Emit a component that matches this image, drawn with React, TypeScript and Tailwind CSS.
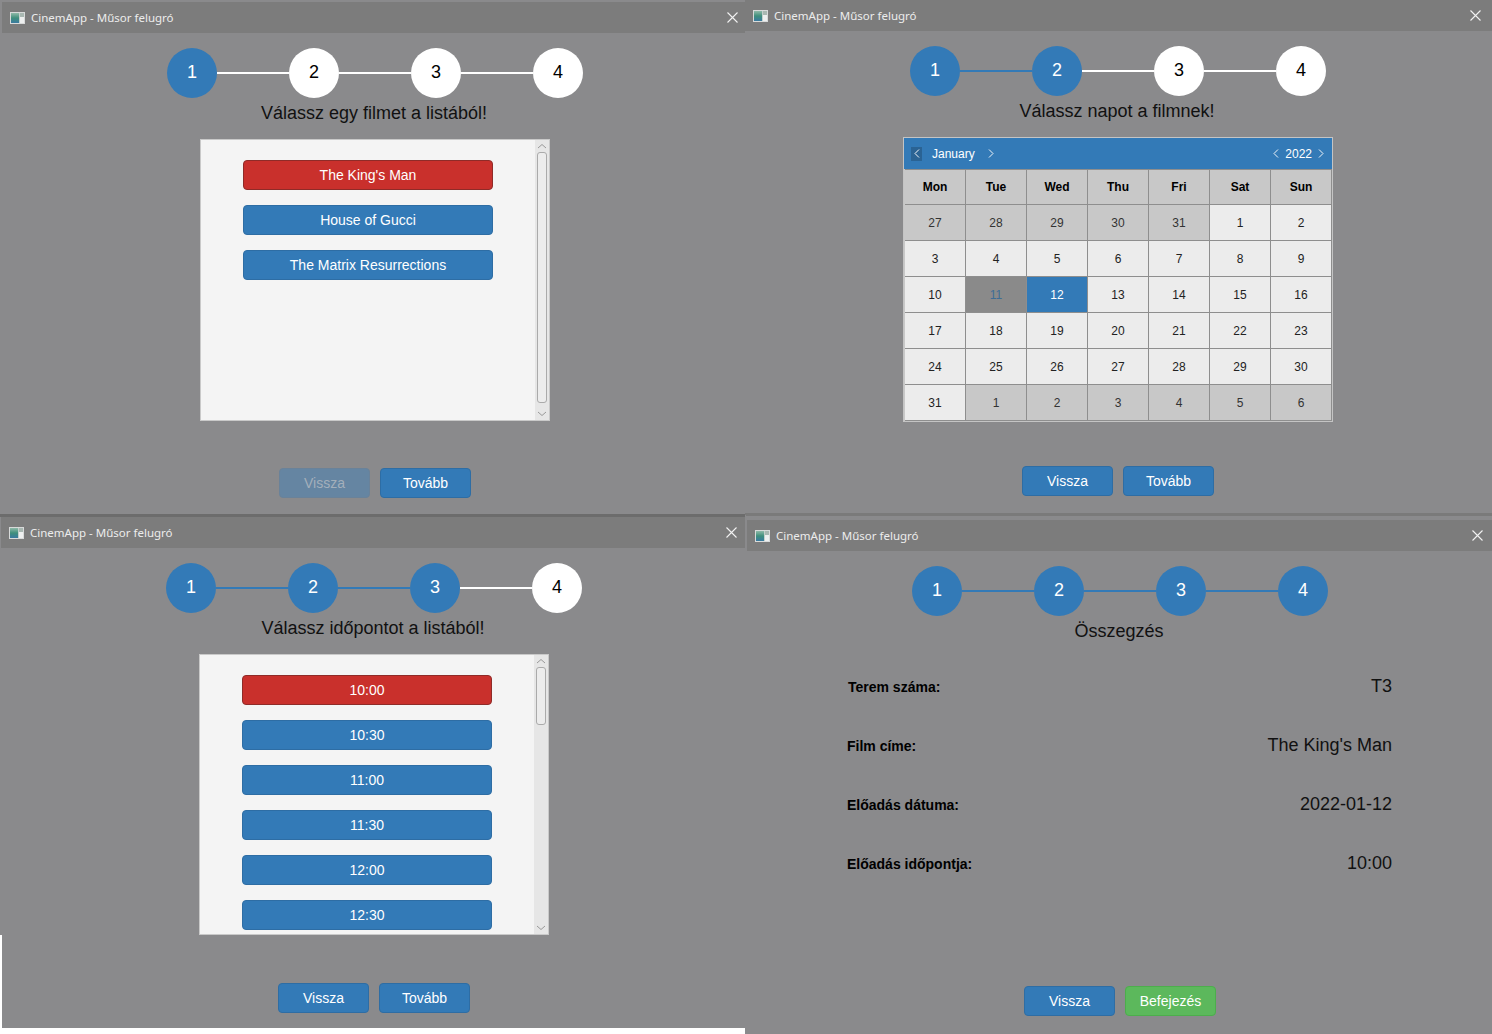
import React from "react";

const sans = "font-['Liberation_Sans',Arial,sans-serif]";

function AppIcon() {
  return (
    <svg width="15" height="12" viewBox="0 0 15 12" className="shrink-0">
      <defs>
        <linearGradient id="appIconFill" x1="0" y1="0" x2="0" y2="1">
          <stop offset="0" stopColor="#8fb9a8" />
          <stop offset="0.5" stopColor="#3f8f7c" />
          <stop offset="1" stopColor="#3a7aa0" />
        </linearGradient>
      </defs>
      <rect x="0" y="0" width="15" height="12" fill="#d8dada" />
      <rect x="1" y="1" width="8" height="10" fill="url(#appIconFill)" />
      <rect x="9" y="1" width="1" height="10" fill="#c4d0cc" />
      <rect x="10" y="1" width="4" height="4" fill="#a9b8b2" />
      <rect x="10" y="5" width="4" height="6" fill="#eef0f0" />
    </svg>
  );
}

function CloseIcon() {
  return (
    <svg width="11" height="11" viewBox="0 0 11 11" className="shrink-0">
      <path d="M0.5 0.5L10.5 10.5M10.5 0.5L0.5 10.5" stroke="#f2f2f2" strokeWidth="1.1" fill="none" />
    </svg>
  );
}

function TitleBar() {
  return (
    <div className="flex ml-[2px] h-[31px] bg-[#7c7c7c] shrink-0">
      <div className="w-[736px] shrink-0 pl-[8px] flex items-center justify-between">
        <div className="flex items-center gap-[6px]">
          <AppIcon />
          <span className="font-['Noto_Sans',sans-serif] text-[11.5px] leading-none text-[#ececec]">
            CinemApp - Műsor felugró
          </span>
        </div>
        <CloseIcon />
      </div>
    </div>
  );
}

// active: how many steps are already blue
function Stepper({ active }: { active: number }) {
  const steps = [1, 2, 3, 4];
  return (
    <div className="flex items-center mt-[15px]">
      {steps.map((n) => (
        <React.Fragment key={n}>
          {n > 1 && (
            <div className={n <= active ? "w-[72px] h-[2px] bg-[#337ab7]" : "w-[72px] h-[2px] bg-white"} />
          )}
          <div
            className={
              n <= active
                ? "w-[50px] h-[50px] pb-[2px] rounded-full flex items-center justify-center text-[18px] bg-[#337ab7] text-white"
                : "w-[50px] h-[50px] pb-[2px] rounded-full flex items-center justify-center text-[18px] bg-white text-black"
            }
          >
            {n}
          </div>
        </React.Fragment>
      ))}
    </div>
  );
}

function Heading({ children }: { children: React.ReactNode }) {
  return <div className="mt-[5px] pr-[2px] h-[20px] leading-[20px] text-[18px] text-[#111]">{children}</div>;
}

function ActionButton({ label, kind }: { label: string; kind: "blue" | "green" | "off" }) {
  const cls =
    kind === "blue"
      ? "bg-[#337ab7] border-[#2e6da4] text-white"
      : kind === "green"
        ? "bg-[#5cb85c] border-[#4cae4c] text-white"
        : "bg-[#6585a2] border-[#6a8299] text-[#a3afbb]";
  return (
    <div className={`w-[91px] h-[30px] rounded-[4px] border flex items-center justify-center text-[14px] ${cls}`}>
      {label}
    </div>
  );
}

function Footer({ top, next = "Tovább", backOff = false, green = false }: { top: string; next?: string; backOff?: boolean; green?: boolean }) {
  return (
    <div className={`flex gap-[10px] ${top}`}>
      <ActionButton label="Vissza" kind={backOff ? "off" : "blue"} />
      <ActionButton label={next} kind={green ? "green" : "blue"} />
    </div>
  );
}

function ScrollBar({ thumb }: { thumb: string }) {
  return (
    <div className="w-[14px] shrink-0 bg-[#e6e6e6] flex flex-col items-center">
      <svg width="10" height="6" viewBox="0 0 10 6" className="mt-[3px] shrink-0">
        <path d="M1 5L5 1.5L9 5" stroke="#999" fill="none" />
      </svg>
      <div className={`mt-[3px] w-[10px] rounded-[3px] border border-[#aaa] bg-[#ececec] shrink-0 ${thumb}`} />
      <svg width="10" height="6" viewBox="0 0 10 6" className="mt-auto mb-[3px] shrink-0">
        <path d="M1 1L5 4.5L9 1" stroke="#999" fill="none" />
      </svg>
    </div>
  );
}

function ListBox({ items, thumb, height }: { items: string[]; thumb: string; height: string }) {
  return (
    <div className={`mt-[16px] w-[350px] border border-[#c9c9c9] bg-[#f4f4f4] flex overflow-hidden ${height}`}>
      <div className="flex-1 flex flex-col items-center gap-[15px] pt-[20px]">
        {items.map((t, i) => (
          <div
            key={t}
            className={
              i === 0
                ? "w-[250px] h-[30px] shrink-0 rounded-[4px] border border-[#8f2b28] bg-[#c9302c] text-white text-[14px] flex items-center justify-center"
                : "w-[250px] h-[30px] shrink-0 rounded-[4px] border border-[#2e6da4] bg-[#337ab7] text-white text-[14px] flex items-center justify-center"
            }
          >
            {t}
          </div>
        ))}
      </div>
      <ScrollBar thumb={thumb} />
    </div>
  );
}

const weekDays = ["Mon", "Tue", "Wed", "Thu", "Fri", "Sat", "Sun"];
const firstGrid = [27, 28, 29, 30, 31];
const dates = [
  ...firstGrid,
  ...Array.from({ length: 31 }, (_, i) => i + 1),
  1, 2, 3, 4, 5, 6,
];

function cellClass(idx: number, d: number) {
  const base = "h-[36px] flex items-center justify-center text-[12px] border-r border-b border-[#8e8e8e]";
  if (idx < 5 || idx > 35) return `${base} bg-[#c8c8c8] text-[#333]`;
  if (d === 11) return `${base} bg-[#8a8a8a] text-[#3f6d96]`;
  if (d === 12) return `${base} bg-[#337ab7] text-white`;
  return `${base} bg-[#ececec] text-[#222]`;
}

function Chevron({ dir }: { dir: "left" | "right" }) {
  return (
    <svg width="6" height="9" viewBox="0 0 6 9" className="block">
      <path d={dir === "left" ? "M5 0.5L1 4.5L5 8.5" : "M1 0.5L5 4.5L1 8.5"} stroke="#f0f4f8" fill="none" />
    </svg>
  );
}

function Calendar() {
  return (
    <div className="mt-[16px] w-[430px] h-[285px] border border-[#c4c4c4] bg-[#c8c8c8] overflow-hidden">
      <div className="h-[31px] bg-[#337ab7] text-white text-[12px] flex items-center pl-[7px] pr-[8px]">
        <div className="w-[11px] h-[14px] bg-[#2a6394] pl-[1px] flex items-center justify-center">
          <Chevron dir="left" />
        </div>
        <span className="ml-[10px]">January</span>
        <span className="ml-[13px]">
          <Chevron dir="right" />
        </span>
        <span className="ml-auto">
          <Chevron dir="left" />
        </span>
        <span className="mx-[6px]">2022</span>
        <Chevron dir="right" />
      </div>
      <div className="grid grid-cols-[repeat(7,61px)] pl-[1px]">
        {weekDays.map((w) => (
          <div key={w} className="h-[36px] flex items-center justify-center text-[12px] font-bold text-black bg-[#c8c8c8] border-r border-t border-b border-[#8e8e8e]">
            {w}
          </div>
        ))}
        {dates.map((d, i) => (
          <div key={i} className={cellClass(i, d)}>
            {d}
          </div>
        ))}
      </div>
    </div>
  );
}

function SummaryRow({ label, value, labelPad = "pl-[102px]" }: { label: string; value: string; labelPad?: string }) {
  return (
    <div className={`h-[59px] flex items-center justify-between pr-[103px] w-[750px] ${labelPad}`}>
      <span className="text-[14px] font-bold text-black">{label}</span>
      <span className="text-[18px] text-[#111] -mt-[2px]">{value}</span>
    </div>
  );
}

function Column({ children }: { children: React.ReactNode }) {
  return <div className="w-[750px] flex flex-col items-center">{children}</div>;
}

export default function App() {
  return (
    <div className={`relative w-[1492px] h-[1034px] bg-white overflow-hidden ${sans}`}>
      {/* film window's neighbour: date picker */}
      <div className="absolute left-[743px] top-[-2px] w-[749px] h-[518px] bg-[#8a8a8c] border-b-[3px] border-[#7a7a7a] pt-[2px] overflow-hidden">
        <TitleBar />
        <Column>
          <Stepper active={2} />
          <Heading>Válassz napot a filmnek!</Heading>
          <Calendar />
          <Footer top="mt-[44px]" />
        </Column>
      </div>

      {/* time list */}
      <div className="absolute left-[-1px] top-[515px] w-[747px] h-[513px] bg-[#8a8a8c] pt-[2px] overflow-hidden">
        <TitleBar />
        <Column>
          <Stepper active={3} />
          <Heading>Válassz időpontot a listából!</Heading>
          <ListBox items={["10:00", "10:30", "11:00", "11:30", "12:00", "12:30"]} thumb="h-[58px]" height="h-[281px]" />
          <Footer top="mt-[48px]" />
        </Column>
      </div>

      {/* film list */}
      <div className="absolute left-0 top-0 w-[745px] h-[517px] bg-[#8a8a8c] border-b-[3px] border-[#6c6c6c] pt-[2px] overflow-hidden">
        <TitleBar />
        <Column>
          <Stepper active={1} />
          <Heading>Válassz egy filmet a listából!</Heading>
          <ListBox items={["The King's Man", "House of Gucci", "The Matrix Resurrections"]} thumb="h-[251px]" height="h-[282px]" />
          <Footer top="mt-[47px]" backOff />
        </Column>
      </div>

      {/* summary */}
      <div className="absolute left-[745px] top-[516px] w-[747px] h-[518px] bg-[#8a8a8c] pt-[4px] overflow-hidden">
        <TitleBar />
        <Column>
          <Stepper active={4} />
          <Heading>Összegzés</Heading>
          <div className="mt-[17px] h-[236px] flex flex-col">
            <SummaryRow label="Terem száma:" value="T3" labelPad="pl-[103px]" />
            <SummaryRow label="Film címe:" value="The King's Man" />
            <SummaryRow label="Előadás dátuma:" value="2022-01-12" />
            <SummaryRow label="Előadás időpontja:" value="10:00" />
          </div>
          <Footer top="mt-[92px]" next="Befejezés" green />
        </Column>
      </div>

      {/* white sliver left of the time window */}
      <div className="absolute left-0 top-[935px] w-[2px] h-[93px] bg-white" />
    </div>
  );
}
